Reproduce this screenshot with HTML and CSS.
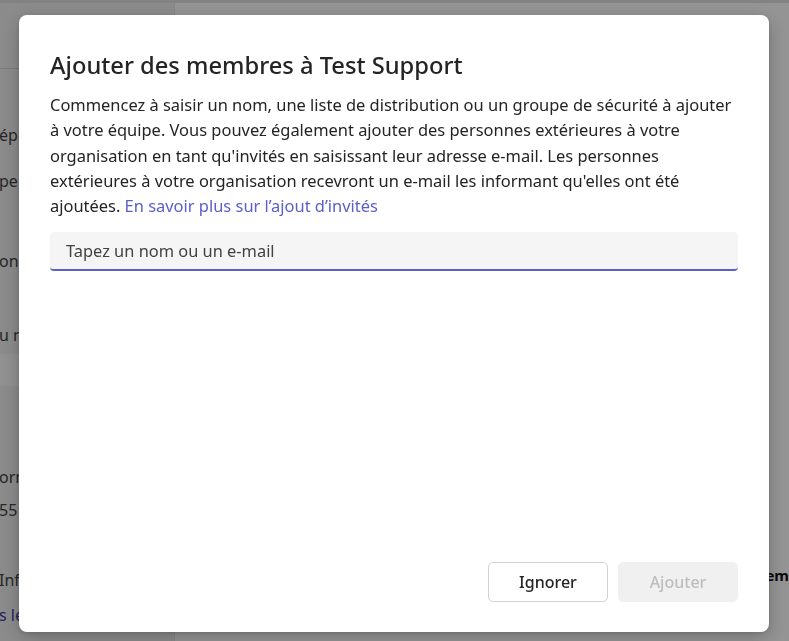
FILE: index.html
```html
<!DOCTYPE html>
<html lang="fr">
<head>
<meta charset="utf-8">
<title>Ajouter des membres</title>
<link rel="stylesheet" href="styles.css">
</head>
<body>
<div class="app">
  <div class="topline"></div>
  <div class="columns">
    <aside class="side">
      <div class="side-head"></div>
      <div class="side-item i1">éplacer</div>
      <div class="side-item i2">pe</div>
      <div class="side-item i3">on</div>
      <div class="side-item i4">u nom</div>
      <div class="side-band"></div>
      <div class="side-item i5">orm</div>
      <div class="side-item i6">55</div>
      <div class="side-item i7">Inf</div>
      <div class="side-item i8 link">s les</div>
    </aside>
    <main class="main">
      <div class="main-footer"><span class="bold">nem</span></div>
    </main>
  </div>
</div>
<div class="overlay">
  <div class="dialog" role="dialog">
    <h1 class="title">Ajouter des membres à Test Support</h1>
    <p class="desc">Commencez à saisir un nom, une liste de distribution ou un groupe de sécurité à ajouter<br>à votre équipe. Vous pouvez également ajouter des personnes extérieures à votre<br>organisation en tant qu'invités en saisissant leur adresse e-mail. Les personnes<br>extérieures à votre organisation recevront un e-mail les informant qu'elles ont été<br>ajoutées. <a class="link-blue" href="#">En savoir plus sur l’ajout d’invités</a></p>
    <div class="field"><input class="input" type="text" placeholder="Tapez un nom ou un e-mail"></div>
    <div class="spacer"></div>
    <div class="actions">
      <button class="btn">Ignorer</button>
      <button class="btn primary" disabled>Ajouter</button>
    </div>
  </div>
</div>
</body>
</html>
```
FILE: styles.css
```css
* { box-sizing: border-box; }
html, body { margin: 0; padding: 0; }
body {
  width: 789px;
  height: 641px;
  overflow: hidden;
  font-family: "Noto Sans", "Open Sans", sans-serif;
  color: #242424;
  background: #fff;
}
.app { height: 641px; display: flex; flex-direction: column; }
.topline { height: 3px; background: #e0e0e0; }
.columns { flex: 1; display: flex; }
.side {
  width: 178px;
  background: #f0f0f0;
  border-right: 1px solid #e6e6e6;
  overflow: hidden;
  white-space: nowrap;
  font-size: 16px;
  color: #424242;
}
.side-head { height: 66px; border-bottom: 1px solid #d6d6d6; }
.side-item { margin-left: -1px; line-height: 22px; }
.i1 { margin-top: 55px; }
.i2 { margin-top: 24px; }
.i3 { margin-top: 58px; }
.i4 { margin-top: 52px; }
.side-band { height: 32px; margin-top: 8px; background: #fafafa; }
.i5 { margin-top: 80px; }
.i6 { margin-top: 11px; }
.i7 { margin-top: 48px; }
.i8 { margin-top: 13px; }
.link { color: #3d3fa8; }
.main { flex: 1; display: flex; flex-direction: column; justify-content: flex-end; background: #fff; }
.main-footer { height: 76px; padding-left: 581px; font-size: 15px; }
.bold { font-weight: 700; color: #111; }

.overlay {
  position: fixed;
  inset: 0;
  background: rgba(0, 0, 0, 0.42);
}
.dialog {
  position: absolute;
  left: 19px;
  top: 15px;
  width: 750px;
  height: 617px;
  background: #fff;
  border-radius: 8px;
  box-shadow: 0 6px 20px rgba(0,0,0,0.22), 0 1px 4px rgba(0,0,0,0.14);
  padding: 34px 31px 30px 31px;
  display: flex;
  flex-direction: column;
}
.title {
  margin: 0;
  font-size: 23.7px;
  line-height: 32px;
  font-weight: 500;
  color: #242424;
}
.desc {
  margin: 11px 0 0 0;
  font-size: 16.45px;
  line-height: 25.3px;
  color: #242424;
  white-space: nowrap;
}
.link-blue { color: #5b5fc7; text-decoration: none; }
.field { margin-top: 14px; }
.input {
  width: 100%;
  height: 39px;
  border: none;
  border-bottom: 2px solid #5b5fc7;
  border-radius: 4px;
  background: #f5f5f5;
  padding: 0 16px;
  font-family: inherit;
  font-size: 16.4px;
  color: #242424;
  outline: none;
}
.input::placeholder { color: #424242; }
.spacer { flex: 1; }
.actions { display: flex; justify-content: flex-end; gap: 10px; }
.btn {
  width: 120px;
  height: 40px;
  border: 1px solid #d1d1d1;
  border-radius: 5px;
  background: #fff;
  font-family: inherit;
  font-size: 16px;
  font-weight: 500;
  color: #242424;
}
.btn.primary {
  background: #f0f0f0;
  border-color: #f0f0f0;
  color: #bdbdbd;
}
```
